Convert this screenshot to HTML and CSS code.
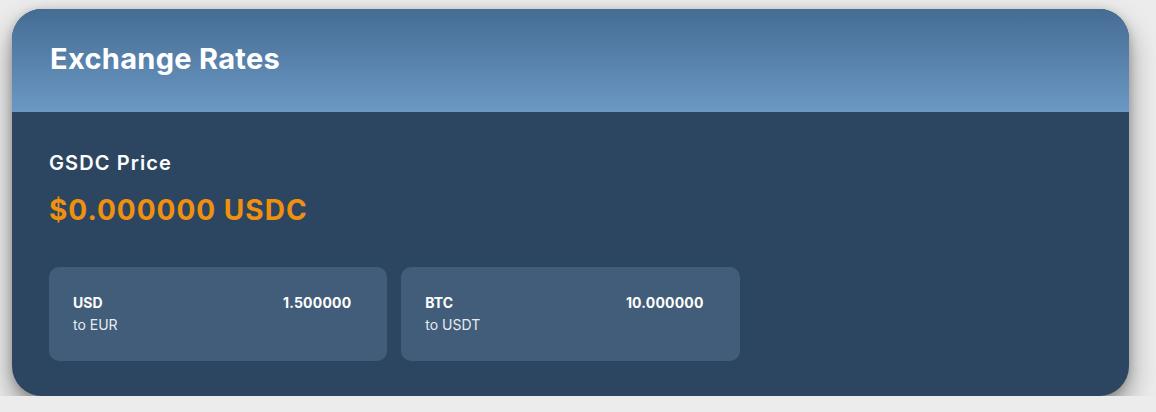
FILE: index.html
```html
<!DOCTYPE html>
<html lang="en">
<head>
<meta charset="utf-8">
<title>Exchange Rates</title>
<link rel="stylesheet" href="styles.css">
</head>
<body>
<div class="page">
  <section class="card">
    <header class="card-header">
      <h1 class="title">Exchange Rates</h1>
    </header>
    <div class="card-body">
      <h2 class="price-label">GSDC Price</h2>
      <div class="price-value">$0.000000 USDC</div>
      <div class="rates">
        <div class="rate">
          <div class="rate-info">
            <div class="rate-code">USD</div>
            <div class="rate-to">to EUR</div>
          </div>
          <div class="rate-value">1.500000</div>
        </div>
        <div class="rate">
          <div class="rate-info">
            <div class="rate-code">BTC</div>
            <div class="rate-to">to USDT</div>
          </div>
          <div class="rate-value">10.000000</div>
        </div>
      </div>
    </div>
  </section>
</div>
</body>
</html>
```

FILE: styles.css
```css
html, body {
  margin: 0;
  padding: 0;
  background: #ececec;
  font-family: Inter, "Liberation Sans", sans-serif;
}

.page {
  padding: 9px 27px 0 12px;
}

.card {
  height: 387px;
  border-radius: 30px;
  overflow: hidden;
  background: #2c4661;
  box-shadow: 0 14px 28px rgba(0, 0, 0, 0.4), 0 2px 10px rgba(0, 0, 0, 0.2);
  display: flex;
  flex-direction: column;
}

.card-header {
  height: 103px;
  flex: none;
  box-sizing: border-box;
  background: linear-gradient(to bottom, #456c93, #6b98c4);
  padding: 0 38px;
  display: flex;
  align-items: center;
}

.title {
  margin: 0 0 3px;
  color: #ffffff;
  font-size: 29px;
  line-height: 36px;
  font-weight: 700;
  letter-spacing: 0.3px;
}

.card-body {
  padding: 37px 37px 35px;
}

.price-label {
  margin: 0;
  color: #ffffff;
  font-size: 20px;
  line-height: 28px;
  font-weight: 600;
  letter-spacing: 1.1px;
}

.price-value {
  margin-top: 15px;
  color: #f0900f;
  font-size: 28px;
  line-height: 36px;
  font-weight: 700;
  letter-spacing: 1px;
}

.rates {
  margin-top: 39px;
  display: grid;
  grid-template-columns: repeat(3, 1fr);
  gap: 14px;
}

.rate {
  height: 94px;
  box-sizing: border-box;
  background: #425d79;
  border-radius: 10px;
  padding: 26px 36px 0 24px;
  display: flex;
  justify-content: space-between;
  align-items: flex-start;
  color: #ffffff;
}

.rate-code {
  font-size: 14px;
  line-height: 20px;
  font-weight: 700;
}

.rate-to {
  font-size: 14px;
  line-height: 20px;
  font-weight: 400;
  color: #e6ebf1;
  margin-top: 2px;
}

.rate-value {
  font-size: 14px;
  line-height: 20px;
  font-weight: 700;
  letter-spacing: 0.2px;
}
```
